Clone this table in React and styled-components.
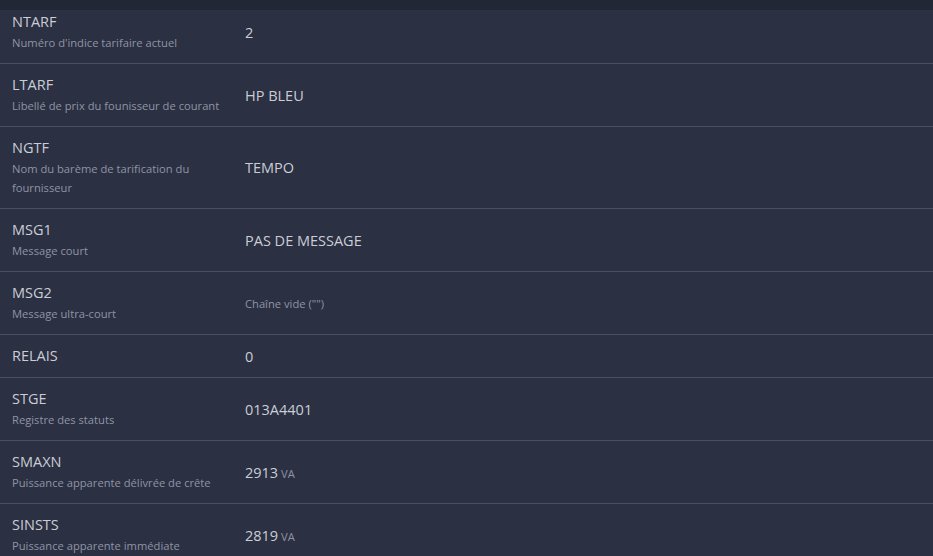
import React from 'react'
import styled, { createGlobalStyle } from 'styled-components'

const GlobalStyle = createGlobalStyle`
    html, body {
        margin: 0;
        padding: 0;
        background: #2b3042;
        overflow: hidden;
    }
    body {
        font-family: "Open Sans", "Noto Sans", sans-serif;
    }
`;

const Page = styled.div`
    position: relative;
    width: 933px;
    height: 556px;
    overflow: hidden;
    background: #2b3042;
`;

// sticky header strip, only its bottom edge is visible
const TopBar = styled.div`
    position: absolute;
    top: 0;
    left: 0;
    right: 0;
    height: 10px;
    background: #222736;
    z-index: 2;
`;

const Table = styled.div`
    display: flex;
    flex-direction: column;
    border-top: 1px solid #4a4f62;
`;

const Row = styled.div`
    display: grid;
    grid-template-columns: 233px 1fr;
    align-items: center;
    border-bottom: 1px solid #4a4f62;
`;

const LabelCell = styled.div`
    padding: 11px 8px 11px 12px;
`;

const Name = styled.div`
    font-size: 14.5px;
    line-height: 20px;
    color: #cacdd6;
`;

const Desc = styled.div`
    margin-top: 1px;
    font-size: 11.2px;
    line-height: 19px;
    color: #8f94a5;
`;

const ValueCell = styled.div`
    padding: 0 12px;
    font-size: ${p => (p.$muted ? '11.2px' : '14.5px')};
    color: ${p => (p.$muted ? '#8f94a5' : '#cacdd6')};
`;

const Unit = styled.span`
    font-size: 11.2px;
    color: #8f94a5;
`;

const rows = [
  { name: 'NTARF', desc: "Numéro d'indice tarifaire actuel", value: '2' },
  { name: 'LTARF', desc: 'Libellé de prix du founisseur de courant', value: 'HP BLEU' },
  { name: 'NGTF', desc: 'Nom du barème de tarification du fournisseur', value: 'TEMPO' },
  { name: 'MSG1', desc: 'Message court', value: 'PAS DE MESSAGE' },
  { name: 'MSG2', desc: 'Message ultra-court', value: 'Chaîne vide ("")', muted: true },
  { name: 'RELAIS', value: '0' },
  { name: 'STGE', desc: 'Registre des statuts', value: '013A4401' },
  { name: 'SMAXN', desc: 'Puissance apparente délivrée de crête', value: '2913', unit: 'VA' },
  { name: 'SINSTS', desc: 'Puissance apparente immédiate', value: '2819', unit: 'VA' },
];

const App = () => {
  return (
    <Page>
      <GlobalStyle />
      <TopBar />
      <Table>
        {rows.map(r => (
          <Row key={r.name}>
            <LabelCell>
              <Name>{r.name}</Name>
              {r.desc && <Desc>{r.desc}</Desc>}
            </LabelCell>
            <ValueCell $muted={r.muted}>
              {r.value}
              {r.unit && <Unit> {r.unit}</Unit>}
            </ValueCell>
          </Row>
        ))}
      </Table>
    </Page>
  )
}

export default App
